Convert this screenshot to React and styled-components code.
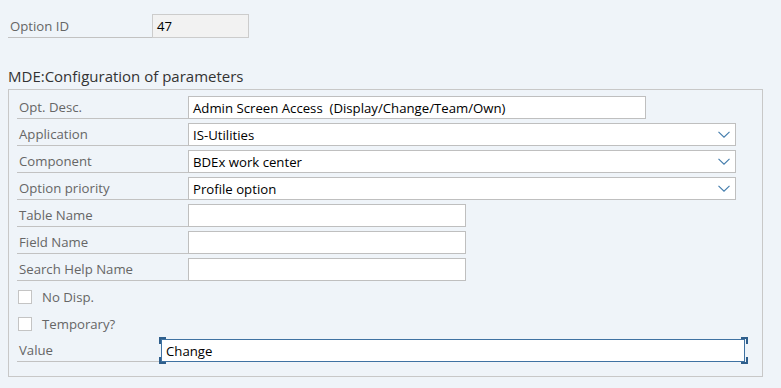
import React from "react";
import styled, { createGlobalStyle } from "styled-components";

const GlobalStyle = createGlobalStyle`
  html, body {
    margin: 0;
    background: #eff4f9;
    font-family: "Open Sans", "Liberation Sans", Arial, sans-serif;
  }
`;

const Page = styled.div`
  padding: 14px 8px 0 8px;
`;

// Option ID header row
const TopRow = styled.div`
  display: flex;
  height: 24px;
`;

const TopLabel = styled.div`
  width: 144px;
  box-sizing: border-box;
  padding-left: 2px;
  border-bottom: 1px solid #c2c2c2;
  font-size: 13.2px;
  color: #666666;
  display: flex;
  align-items: center;
`;

const ReadOnlyBox = styled.div`
  width: 97px;
  box-sizing: border-box;
  background: #f2f2f2;
  border: 1px solid #cccccc;
  padding-left: 4px;
  font-size: 13.2px;
  color: #000;
  display: flex;
  align-items: center;
`;

const GroupTitle = styled.div`
  margin-top: 29px;
  font-size: 15px;
  line-height: 18px;
  color: #333333;
`;

const GroupBox = styled.div`
  margin-top: 4px;
  width: 755px;
  box-sizing: border-box;
  border: 1px solid #c8c8c8;
  padding: 6px 8px 14px 8px;
  display: flex;
  flex-direction: column;
  gap: 4px;
`;

const Row = styled.div`
  display: flex;
  height: 23px;
`;

const Label = styled.div`
  width: ${(p) => p.$width || 171}px;
  box-sizing: border-box;
  padding-left: 2px;
  border-bottom: 1px solid #c2c2c2;
  font-size: 13.2px;
  color: #666666;
  display: flex;
  align-items: center;
`;

const Field = styled.div`
  position: relative;
  width: ${(p) => p.$width}px;
  box-sizing: border-box;
  background: #ffffff;
  border: 1px solid ${(p) => (p.$focused ? "#3f72a2" : "#bfbfbf")};
  padding: 0 4px;
  font-size: 13.2px;
  color: #000;
  display: flex;
  align-items: center;
  justify-content: space-between;
  white-space: pre;
`;

const Chevron = styled.svg`
  width: 12px;
  height: 7px;
  margin-right: 1px;
`;

const Corner = styled.span`
  position: absolute;
  width: 5px;
  height: 5px;
  border-color: #2f5f8c;
  border-style: solid;
  border-width: 0;
  ${(p) => (p.$top ? "top: -3px; border-top-width: 2px;" : "bottom: -3px; border-bottom-width: 2px;")}
  ${(p) => (p.$left ? "left: -3px; border-left-width: 2px;" : "right: -4px; border-right-width: 2px;")}
`;

const CheckRow = styled.div`
  display: flex;
  align-items: center;
  height: 23px;
  padding-left: 1px;
  gap: 10px;
  font-size: 13.2px;
  color: #666666;
`;

const Checkbox = styled.span`
  width: 14px;
  height: 14px;
  box-sizing: border-box;
  background: #ffffff;
  border: 1px solid #c4c4c4;
`;

const ChevronIcon = () => (
  <Chevron viewBox="0 0 12 7">
    <path d="M0.5 0.8 L6 6.2 L11.5 0.8" fill="none" stroke="#427cac" strokeWidth="1.1" />
  </Chevron>
);

const rows = [
  { label: "Opt. Desc.", value: "Admin Screen Access  (Display/Change/Team/Own)", width: 458 },
  { label: "Application", value: "IS-Utilities", width: 548, select: true },
  { label: "Component", value: "BDEx work center", width: 548, select: true },
  { label: "Option priority", value: "Profile option", width: 548, select: true },
  { label: "Table Name", value: "", width: 278 },
  { label: "Field Name", value: "", width: 278 },
  { label: "Search Help Name", value: "", width: 278 },
];

export default function App() {
  return (
    <Page>
      <GlobalStyle />
      <TopRow>
        <TopLabel>Option ID</TopLabel>
        <ReadOnlyBox>47</ReadOnlyBox>
      </TopRow>

      <GroupTitle>MDE:Configuration of parameters</GroupTitle>
      <GroupBox>
        {rows.map((r) => (
          <Row key={r.label}>
            <Label>{r.label}</Label>
            <Field $width={r.width}>
              <span>{r.value}</span>
              {r.select && <ChevronIcon />}
            </Field>
          </Row>
        ))}

        <CheckRow>
          <Checkbox />
          No Disp.
        </CheckRow>
        <CheckRow>
          <Checkbox />
          Temporary?
        </CheckRow>

        <Row>
          <Label $width={144}>Value</Label>
          <Field $width={584} $focused>
            <span>Change</span>
            <Corner $top $left />
            <Corner $left />
            <Corner $top />
            <Corner />
          </Field>
        </Row>
      </GroupBox>
    </Page>
  );
}
